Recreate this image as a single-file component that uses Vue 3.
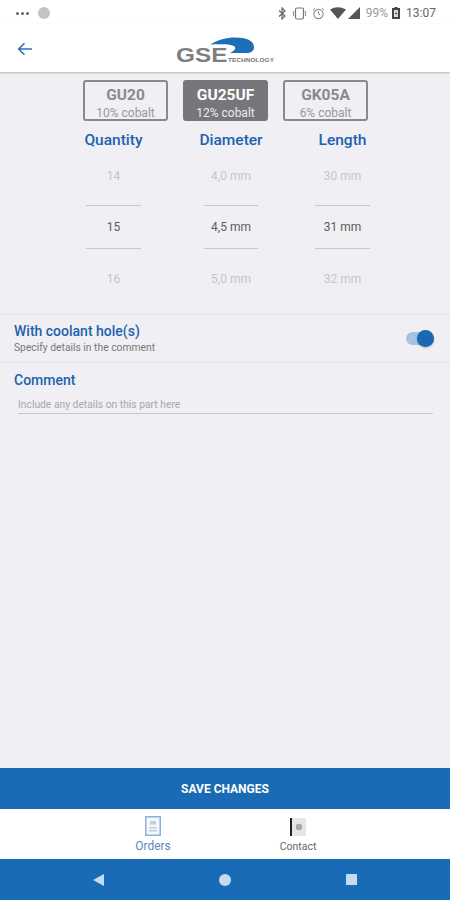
<template>
  <div class="screen">
    <div class="status-bar">
      <div class="status-left">
        <span class="dots"><i></i><i></i><i></i></span>
        <span class="app-dot"></span>
      </div>
      <div class="status-right">
        <svg width="9" height="13" viewBox="0 0 9 13"><path d="M1 3.500l6 5.500-3 3V1l3 3-6 5.500" fill="none" stroke="#666" stroke-width="1.200"/></svg>
        <svg width="15" height="13" viewBox="0 0 15 13"><rect x="3.500" y="1" width="8" height="11" rx="1.500" fill="none" stroke="#777" stroke-width="1.200"/><path d="M1.500 4v5M13.500 4v5" stroke="#999" stroke-width="1.200"/></svg>
        <svg width="13" height="13" viewBox="0 0 13 13"><circle cx="6.500" cy="7" r="4.600" fill="none" stroke="#888" stroke-width="1.100"/><path d="M6.500 4.500V7l1.800 1M1 3l2.400-2M12 3L9.600 1" fill="none" stroke="#888" stroke-width="1"/></svg>
        <svg class="wifi" width="16" height="12" viewBox="0 0 16 12"><path d="M0 2.500Q8-2 16 2.500L8 12z" fill="#555"/></svg>
        <svg class="signal" width="12" height="12" viewBox="0 0 12 12"><path d="M12 0v12H0z" fill="#555"/></svg>
        <span class="battery-text">99%</span>
        <svg width="8" height="12" viewBox="0 0 8 12"><path d="M2.500 0h3v1H8v11H0V1h2.500z" fill="#444"/><rect x="2" y="3" width="4" height="7" fill="#ddd"/><path d="M4.500 3.500L3 7h1.500l-1 2.500L5.500 6H4z" fill="#444"/></svg>
        <span class="clock">13:07</span>
      </div>
    </div>

    <header class="app-header">
      <svg class="back" width="16" height="14" viewBox="0 0 16 14"><path d="M15 7H2M7.500 1.200L1.700 7l5.800 5.800" fill="none" stroke="#2a70b9" stroke-width="1.500"/></svg>
      <svg class="logo" width="100" height="30" viewBox="0 0 100 30">
        <path d="M34 7.500C42 3 50 .5 59 .5c11 0 19 3 19 9.500 0 4-3 6-8 6H54c4-2 6-4 5-6-2-3-14-3-25-2.500z" fill="#1f6fb8"/>
        <text x="0" y="25" transform="scale(1.16 1)" class="logo-gse">GSE</text>
        <text x="52" y="25" textLength="46" lengthAdjust="spacingAndGlyphs" class="logo-tech">TECHNOLOGY</text>
      </svg>
    </header>

    <main class="content">
      <div class="grades">
        <div v-for="g in grades" :key="g.name" class="grade" :class="{ active: g.active }">
          <span class="grade-name">{{ g.name }}</span>
          <span class="grade-sub">{{ g.sub }}</span>
        </div>
      </div>

      <div class="pickers">
        <div v-for="p in pickers" :key="p.title" class="picker" :class="p.cls">
          <div class="picker-title">{{ p.title }}</div>
          <div class="picker-item before">{{ p.values[0] }}</div>
          <div class="picker-item current">{{ p.values[1] }}</div>
          <div class="picker-item after">{{ p.values[2] }}</div>
        </div>
      </div>

      <div class="coolant">
        <div>
          <div class="label">With coolant hole(s)</div>
          <div class="hint">Specify details in the comment</div>
        </div>
        <div class="toggle"><span class="knob"></span></div>
      </div>

      <div class="comment">
        <div class="label">Comment</div>
        <div class="comment-input">Include any details on this part here</div>
      </div>
    </main>

    <button class="save">SAVE CHANGES</button>

    <nav class="tabs">
      <div class="tab orders">
        <svg width="16" height="20" viewBox="0 0 16 20"><rect x=".75" y=".75" width="14.500" height="18.500" fill="#f4f7fb" stroke="#8fb0da" stroke-width="1.500"/><path d="M5 5h6v3.500H5zM4 11h8v1.500H4zM4 14h8v1.500H4z" fill="#c5cdd8"/></svg>
        <span>Orders</span>
      </div>
      <div class="tab contact">
        <svg width="16" height="18" viewBox="0 0 16 18"><rect width="16" height="18" fill="#e6e6e6"/><rect width="2" height="18" fill="#222"/><circle cx="9" cy="9" r="3.200" fill="#aaa"/></svg>
        <span>Contact</span>
      </div>
    </nav>

    <div class="nav-bar">
      <svg width="11" height="12" viewBox="0 0 11 12"><path d="M11 0v12L0 6z" fill="#c6dbf0"/></svg>
      <span class="nav-home"></span>
      <span class="nav-recent"></span>
    </div>
  </div>
</template>

<script setup>
const grades = [
  { name: 'GU20', sub: '10% cobalt' },
  { name: 'GU25UF', sub: '12% cobalt', active: true },
  { name: 'GK05A', sub: '6% cobalt' },
]

const pickers = [
  { title: 'Quantity', cls: 'qty', values: ['14', '15', '16'] },
  { title: 'Diameter', cls: 'dia', values: ['4,0 mm', '4,5 mm', '5,0 mm'] },
  { title: 'Length', cls: 'len', values: ['30 mm', '31 mm', '32 mm'] },
]
</script>

<style>
body {
  margin: 0;
}
</style>

<style scoped>
.screen {
  width: 450px;
  height: 900px;
  display: flex;
  flex-direction: column;
  overflow: hidden;
  background: #efeff4;
  font-family: Roboto, "Liberation Sans", sans-serif;
}
.status-bar {
  height: 24px;
  flex: none;
  background: #fff;
  display: flex;
  align-items: center;
  justify-content: space-between;
  padding: 2px 14px 0 16px;
  box-sizing: border-box;
}
.status-left,
.status-right {
  display: flex;
  align-items: center;
}
.dots {
  display: flex;
  gap: 2px;
}
.dots i {
  width: 3px;
  height: 3px;
  border-radius: 50%;
  background: #666;
}
.app-dot {
  width: 12px;
  height: 12px;
  border-radius: 50%;
  background: #c4c4c4;
  margin-left: 9px;
}
.status-right {
  gap: 5px;
  color: #666;
  font-size: 12px;
}
.signal {
  margin-left: -3px;
}
.battery-text {
  margin-left: 1px;
  margin-right: -1px;
  color: #999;
}
.clock {
  margin-left: 1px;
  color: #666;
  font-size: 12px;
}
.app-header {
  height: 48px;
  flex: none;
  background: #fff;
  display: flex;
  align-items: center;
  justify-content: center;
  position: relative;
  box-shadow: 0 1px 2px rgba(0, 0, 0, 0.25);
  z-index: 1;
}
.back {
  position: absolute;
  left: 17px;
  top: 18px;
}
.logo {
  margin-top: 7px;
  margin-left: 1px;
}
.logo-gse {
  font: 700 21px "Liberation Sans", sans-serif;
  fill: #7d7f82;
}
.logo-tech {
  font: 700 6px "Liberation Sans", sans-serif;
  fill: #777;
}
.content {
  flex: 1;
  min-height: 0;
}
.grades {
  display: flex;
  justify-content: center;
  gap: 15px;
  padding: 8px 0 0 1px;
}
.grade {
  width: 85px;
  height: 41px;
  box-sizing: border-box;
  border: 2px solid #8a8a8e;
  border-radius: 3px;
  display: flex;
  flex-direction: column;
  align-items: center;
  color: #8a8a8e;
  padding-top: 4px;
}
.grade.active {
  background: #77777b;
  border-color: #77777b;
  color: #fff;
}
.grade-name {
  font-size: 15.500px;
  font-weight: 700;
  line-height: 18px;
}
.grade-sub {
  font-size: 12px;
  line-height: 16px;
  margin-top: 1px;
  opacity: 0.85;
}
.pickers {
  display: flex;
  padding: 9px 0 0 86px;
  height: 194px;
  box-sizing: border-box;
  border-bottom: 1px solid #e5e5ea;
}
.picker {
  display: flex;
  flex-direction: column;
  align-items: center;
  width: 55px;
}
.qty {
  margin-right: 63px;
}
.dia {
  width: 54px;
  margin-right: 57px;
}
.picker-title {
  white-space: nowrap;
  color: #1d62ad;
  font-size: 15.500px;
  font-weight: 500;
  line-height: 20px;
  height: 17px;
}
.picker-item {
  width: 100%;
  display: flex;
  align-items: center;
  justify-content: center;
  white-space: nowrap;
  font-size: 12px;
  color: #c6c6ca;
}
.picker-item.before {
  height: 58px;
}
.picker-item.current {
  height: 44px;
  box-sizing: border-box;
  color: #5c5c60;
  border-top: 1px solid #c8c8cc;
  border-bottom: 1px solid #c8c8cc;
}
.picker-item.after {
  height: 60px;
}
.coolant {
  height: 48px;
  box-sizing: border-box;
  display: flex;
  align-items: center;
  justify-content: space-between;
  padding: 0 16px 0 14px;
  border-bottom: 1px solid #e5e5ea;
}
.label {
  color: #1d62ad;
  font-size: 14px;
  font-weight: 500;
  line-height: 17px;
}
.hint {
  color: #77777b;
  font-size: 10.300px;
  line-height: 15px;
}
.toggle {
  width: 28px;
  height: 13px;
  border-radius: 7px;
  background: #a5c2e2;
  position: relative;
}
.knob {
  position: absolute;
  right: 0;
  top: -2px;
  width: 17px;
  height: 17px;
  border-radius: 50%;
  background: #1a67b3;
  box-shadow: 0 1px 2px rgba(0, 0, 0, 0.25);
}
.comment {
  padding: 9px 17px 0 14px;
}
.comment-input {
  margin: 7px 0 0 4px;
  color: #a8a8ac;
  font-size: 10.300px;
  line-height: 17px;
  border-bottom: 1px solid #c8c8cc;
}
.save {
  height: 41px;
  flex: none;
  border: 0;
  padding: 0;
  background: #1a6bb5;
  color: #fff;
  font-family: inherit;
  font-size: 12px;
  font-weight: 700;
}
.tabs {
  height: 50px;
  flex: none;
  background: #fff;
  display: flex;
  justify-content: center;
  gap: 95px;
  padding-left: 1px;
  box-sizing: border-box;
}
.tab {
  width: 50px;
  display: flex;
  flex-direction: column;
  align-items: center;
  font-size: 12px;
}
.orders {
  padding-top: 7px;
  color: #5f86bd;
}
.orders span {
  margin-top: 3px;
}
.contact {
  padding-top: 9px;
  color: #666;
  font-size: 10.500px;
}
.contact span {
  margin-top: 4px;
}
.nav-bar {
  height: 41px;
  flex: none;
  background: #1a6bb5;
  display: flex;
  align-items: center;
  justify-content: center;
  gap: 115px;
}
.nav-home {
  width: 12px;
  height: 12px;
  border-radius: 50%;
  background: #c6dbf0;
}
.nav-recent {
  width: 11px;
  height: 11px;
  background: #c6dbf0;
}
</style>
